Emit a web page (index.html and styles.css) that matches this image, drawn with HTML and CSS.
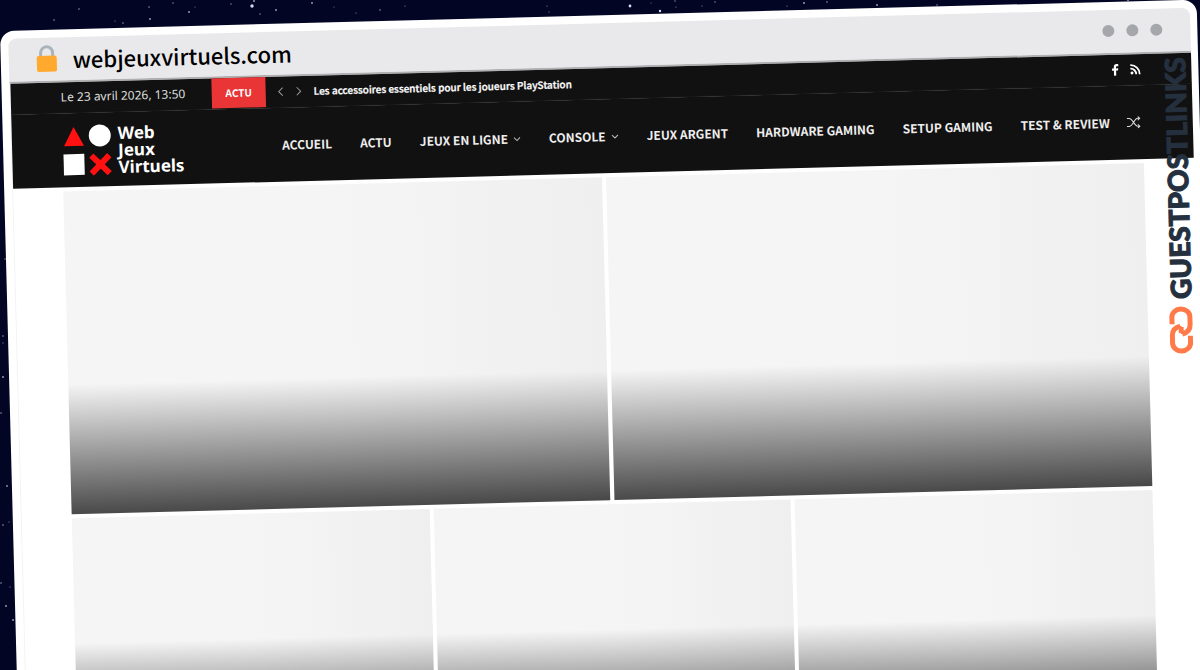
FILE: index.html
```html
<!DOCTYPE html>
<html lang="fr">
<head>
<meta charset="utf-8">
<title>webjeuxvirtuels.com</title>
<link rel="stylesheet" href="styles.css">
</head>
<body>
<div class="scene">
  <svg class="stars" width="1200" height="670" aria-hidden="true" fill="#8f98bd">
    <circle cx="79" cy="9" r="0.800"/><circle cx="54" cy="20" r="0.800"/><circle cx="149" cy="7" r="0.800"/><circle cx="150" cy="19" r="1"/><circle cx="189" cy="12" r="1"/><circle cx="173" cy="3" r="0.700"/><circle cx="195" cy="7" r="0.500"/><circle cx="231" cy="4" r="0.700"/><circle cx="252" cy="6" r="1.700" fill="#d5daf2"/><circle cx="254" cy="1" r="1"/><circle cx="260" cy="14" r="0.700"/><circle cx="276" cy="10" r="1"/><circle cx="123" cy="23" r="0.800"/><circle cx="115" cy="21" r="0.600"/><circle cx="312" cy="3" r="1"/><circle cx="334" cy="7" r="0.500"/><circle cx="356" cy="13" r="0.600"/><circle cx="380" cy="10" r="0.800"/><circle cx="405" cy="6" r="0.600"/><circle cx="547" cy="6" r="0.600"/><circle cx="549" cy="12" r="0.600"/><circle cx="630" cy="6" r="1.400" fill="#d5daf2"/><circle cx="660" cy="11" r="1.200" fill="#d5daf2"/><circle cx="651" cy="3" r="0.500"/><circle cx="675" cy="1" r="0.700"/><circle cx="676" cy="7" r="0.600"/><circle cx="702" cy="6" r="0.600"/><circle cx="715" cy="2" r="0.700"/><circle cx="787" cy="6" r="0.600"/><circle cx="804" cy="3" r="1"/><circle cx="827" cy="2" r="0.800"/><circle cx="877" cy="5" r="1"/><circle cx="937" cy="5" r="0.700"/><circle cx="1128" cy="0" r="1"/>
    <circle cx="5" cy="259" r="0.700"/><circle cx="3" cy="336" r="0.800"/><circle cx="3" cy="343" r="0.600"/><circle cx="3" cy="377" r="1"/><circle cx="1" cy="413" r="0.800"/><circle cx="7" cy="486" r="0.900"/><circle cx="9" cy="522" r="0.600"/><circle cx="3" cy="525" r="0.800"/><circle cx="1" cy="583" r="0.800"/><circle cx="10" cy="587" r="0.600"/><circle cx="6" cy="606" r="1"/><circle cx="13" cy="620" r="1"/>
  </svg>
  <div class="window">
    <div class="address-bar">
      <svg class="lock" viewBox="0 0 22 28" aria-hidden="true"><path d="M5 14V8a6 6 0 0 1 12 0v6" fill="none" stroke="#a9b4bb" stroke-width="3"/><rect x="1" y="11" width="20" height="16" rx="2" fill="#ffa92e"/></svg>
      <span class="domain">webjeuxvirtuels.com</span>
      <span class="dots"><i></i><i></i><i></i></span>
    </div>
    <div class="page">
      <div class="topbar">
        <span class="date">Le 23 avril 2026, 13:50</span>
        <span class="tag">ACTU</span>
        <button class="arrow" aria-label="Précédent"><svg viewBox="0 0 6 10"><path d="M5 1 1 5l4 4"/></svg></button>
        <button class="arrow" aria-label="Suivant"><svg viewBox="0 0 6 10"><path d="m1 1 4 4-4 4"/></svg></button>
        <a class="headline" href="#">Les accessoires essentiels pour les joueurs PlayStation</a>
        <span class="social">
          <a href="#" aria-label="Facebook"><svg viewBox="0 0 12 12"><path d="M4.500 12V6.800H2.700V4.600h1.800V3.100C4.500 1.200 5.600.300 7.300.300c.8 0 1.500.1 1.700.1v2H7.800c-.9 0-1.100.5-1.100 1.100v1.100h2.200l-.3 2.200H6.700V12z" fill="#fff"/></svg></a>
          <a href="#" aria-label="RSS"><svg viewBox="0 0 12 12"><circle cx="2.500" cy="9.500" r="1.500" fill="#fff"/><path d="M1 5.300A5.500 5.500 0 0 1 6.700 11M1 1.800A9 9 0 0 1 10.200 11" fill="none" stroke="#fff" stroke-width="1.800"/></svg></a>
        </span>
      </div>
      <header class="header">
        <a class="logo" href="#">
          <svg viewBox="0 0 50 52" aria-hidden="true"><path d="M11 3 21 22H1z" fill="#f11"/><circle cx="37" cy="12" r="11" fill="#fff"/><path d="M0 30h21v21H0z" fill="#fff"/><path d="m28 32 18 18m0-18L28 50" stroke="#f11" stroke-width="6"/></svg>
          <span>Web<br>Jeux<br>Virtuels</span>
        </a>
        <nav class="nav">
          <a href="#">ACCUEIL</a>
          <a href="#">ACTU</a>
          <a href="#">JEUX EN LIGNE<svg viewBox="0 0 8 5"><path d="m1 1 3 3 3-3"/></svg></a>
          <a href="#">CONSOLE<svg viewBox="0 0 8 5"><path d="m1 1 3 3 3-3"/></svg></a>
          <a href="#">JEUX ARGENT</a>
          <a href="#">HARDWARE GAMING</a>
          <a href="#">SETUP GAMING</a>
          <a href="#">TEST &amp; REVIEW</a>
        </nav>
        <button class="shuffle" aria-label="Article aléatoire"><svg viewBox="0 0 14 12"><path d="M0 2h2.500c3.500 0 5 8 8.500 8h2M0 10h2.500C6 10 7.500 2 11 2h2M11 0l2 2-2 2M11 8l2 2-2 2"/></svg></button>
      </header>
      <main class="tiles">
        <div class="row row-large"><a class="tile" href="#" aria-label="Article 1"></a><a class="tile" href="#" aria-label="Article 2"></a></div>
        <div class="row row-small"><a class="tile" href="#" aria-label="Article 3"></a><a class="tile" href="#" aria-label="Article 4"></a><a class="tile" href="#" aria-label="Article 5"></a></div>
      </main>
    </div>
    <div class="brand">
      <svg viewBox="0 0 24 48" aria-hidden="true"><g fill="none" stroke="#ff7a48" stroke-width="5"><path d="M3 18v-7a9 8 0 0 1 18 0v8q0 7-8 9"/><path d="M21 30v7a9 8 0 0 1-18 0v-8q0-7 8-9"/><path d="M11 20v7M13 21v7" stroke-width="3"/></g></svg>
      <span>GUESTPOSTLINKS</span>
    </div>
  </div>
</div>
</body>
</html>
```
FILE: styles.css
```css
* { box-sizing: border-box; }

body {
  margin: 0;
  font-family: "Noto Sans CJK SC", "Noto Sans", sans-serif;
}

a { color: inherit; text-decoration: none; }

button {
  display: flex;
  padding: 0;
  border: 0;
  background: none;
}

svg { display: block; flex: none; }

.scene {
  position: relative;
  height: 100vh;
  padding: 31px 3px 0 0;
  overflow: hidden;
  background: #020524;
}

.stars {
  position: absolute;
  top: 0;
  left: 0;
}

.window {
  position: relative;
  padding: 8px 7px 100px 8px;
  border-radius: 14px;
  background: #fff;
  transform: rotate(-1.5deg);
  transform-origin: 0 0;
}

.address-bar {
  display: flex;
  align-items: center;
  height: 45px;
  padding: 0 28px 2px 27px;
  border-bottom: 2px solid #aeb0b2;
  border-radius: 8px 8px 0 0;
  background: #e9e9eb;
}

.lock { width: 22px; height: 28px; }

.domain {
  margin-left: 15px;
  font-size: 22px;
  line-height: 32px;
  font-weight: 500;
  color: #000;
}

.dots {
  display: flex;
  gap: 12px;
  margin-left: auto;
}

.dots i {
  width: 12px;
  height: 12px;
  border-radius: 50%;
  background: #a6a7aa;
}

.page { border-left: 1px solid #f2f4f2; }

.topbar {
  display: flex;
  align-items: center;
  height: 31px;
  padding: 0 50px;
  border-bottom: 1px solid #171717;
  background: #111;
  color: #fff;
}

.date {
  width: 151px;
  font: 12px/20px "Noto Sans", sans-serif;
  color: #ddd;
}

.tag {
  width: 54px;
  margin-right: 12px;
  background: #e93535;
  font-size: 10px;
  line-height: 30px;
  font-weight: 700;
  text-align: center;
}

.arrow { margin-right: 12px; }

.arrow svg {
  width: 6px;
  height: 10px;
  fill: none;
  stroke: #999;
}

.headline {
  font-size: 10px;
  line-height: 20px;
  font-weight: 500;
  -webkit-text-stroke: 0.3px #fff;
}

.social {
  display: flex;
  gap: 8px;
  margin-left: auto;
}

.social svg { width: 12px; height: 12px; }

.header {
  display: flex;
  align-items: center;
  height: 74px;
  padding: 0 52px 0 51px;
  background: #111;
  color: #fff;
}

.logo {
  display: flex;
  align-items: center;
  gap: 5px;
  font: 700 17px/17px "Noto Sans", sans-serif;
}

.logo svg { width: 50px; height: 52px; }

.nav {
  display: flex;
  gap: 28px;
  margin-left: auto;
  font-size: 12px;
  line-height: 20px;
  font-weight: 700;
  color: #eee;
}

.nav a {
  display: flex;
  align-items: center;
  gap: 5px;
}

.nav svg {
  width: 8px;
  height: 5px;
  fill: none;
  stroke: #bbb;
}

.shuffle { margin-left: 17px; }

.shuffle svg {
  width: 14px;
  height: 12px;
  fill: none;
  stroke: #ddd;
}

.tiles {
  display: grid;
  gap: 4px;
  padding: 4px 50px;
}

.row { display: grid; gap: 4px; }

.row-large { grid-template-columns: repeat(2, 1fr); }

.row-small { grid-template-columns: repeat(3, 1fr); }

.tile {
  height: 323px;
  background:
    linear-gradient(rgba(0, 0, 0, 0), rgba(0, 0, 0, 0.7)) bottom / 100% 130px no-repeat,
    linear-gradient(90deg, #f5f5f5 50%, #efefef);
}

.row-small .tile {
  height: 229px;
  background-size: 100% 104px, auto;
}

.brand {
  position: absolute;
  top: 57px;
  right: 8px;
  display: flex;
  align-items: center;
  gap: 7px;
  writing-mode: vertical-rl;
  transform: rotate(180deg);
  font: 900 28px/32px Lato, sans-serif;
  color: #25303f;
  -webkit-text-stroke: 1px #25303f;
}

.brand svg { width: 24px; height: 48px; }
```
